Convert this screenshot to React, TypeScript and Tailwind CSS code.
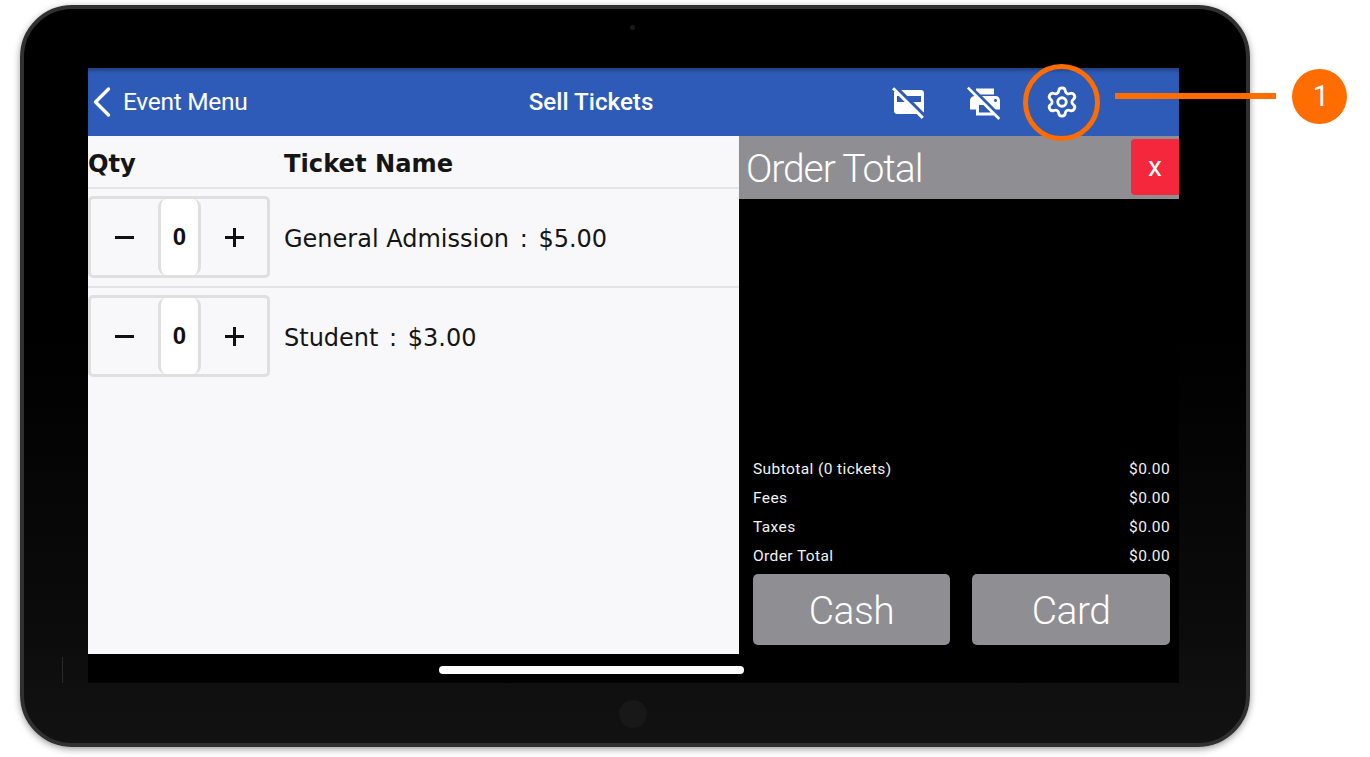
import React from "react";
import { Settings } from "lucide-react";
import { MdCreditCardOff, MdPrintDisabled } from "react-icons/md";

const dj = { fontFamily: '"DejaVu Sans", sans-serif' };

function Stepper() {
  return (
    <div className="flex h-[82px] w-[182px] items-stretch rounded-[5px] border-[3px] border-[#dfdfdf] bg-[#f8f8fa]">
      <div className="flex w-[67px] items-center justify-center">
        <span className="block h-[3px] w-[19px] bg-[#111]" />
      </div>
      <div className="flex w-[43px] items-center justify-center rounded-[8px] border-x-[3px] border-[#dfdfdf] bg-white text-[24px] font-bold text-[#111]" style={{ fontFamily: '"Liberation Sans", sans-serif' }}>0</div>
      <div className="flex flex-1 items-center justify-center">
        <span className="relative block h-[19px] w-[19px]">
          <span className="absolute left-0 top-[8px] h-[3px] w-[19px] bg-[#111]" />
          <span className="absolute left-[8px] top-0 h-[19px] w-[3px] bg-[#111]" />
        </span>
      </div>
    </div>
  );
}

function Row({ name, price, last }: { name: string; price: string; last?: boolean }) {
  return (
    <div className={last ? "flex h-[99px] pt-[7px]" : "flex h-[99px] border-b-[2px] border-[#e4e4e6] pt-[7px]"}>
      <Stepper />
      <div className="ml-[14px] flex h-[82px] items-center whitespace-pre pt-[4px] text-[24px] text-[#151515]" style={dj}>
        {name}
        <span className="mx-[3px]"> : </span>
        {price}
      </div>
    </div>
  );
}

function Line({ l }: { l: string }) {
  return (
    <div className="flex h-[29px] items-center justify-between pt-[2px] text-[15.5px] tracking-[0.4px] text-[#f2f2f2]">
      <span>{l}</span>
      <span>$0.00</span>
    </div>
  );
}

export default function App() {
  return (
    <div className="relative h-[757px] w-[1370px] overflow-hidden bg-white pl-[20px] pt-[5px]" style={{ fontFamily: 'Roboto, "Liberation Sans", sans-serif' }}>
      <div className="relative h-[742px] w-[1230px] rounded-[52px] border-[4px] border-[#303030] bg-[linear-gradient(to_bottom,#000_0%,#000_45%,#0a0a0a_80%,#121212_100%)] pl-[64px] pt-[59px] shadow-[0_2px_7px_rgba(0,0,0,0.4)]">
        <span className="absolute left-[606px] top-[16px] h-[5px] w-[5px] rounded-full bg-[#1a1a1a]" />
        <div className="flex h-[615px] w-[1091px] flex-col bg-black">
          <header className="flex h-[68px] items-center bg-[#2d5bb7] text-white shadow-[inset_0_5px_4px_-3px_rgba(0,0,0,0.35)]">
            <div className="flex w-[403px] items-center">
              <svg className="ml-[5px]" width="18" height="32" viewBox="0 0 18 32" fill="none" stroke="currentColor" strokeWidth="3.4" strokeLinecap="round" strokeLinejoin="round">
                <path d="M15.5 3 L2.5 16 L15.5 29" />
              </svg>
              <span className="ml-[12px] text-[24.5px] tracking-[-0.3px]">Event Menu</span>
            </div>
            <span className="w-[200px] text-center text-[24.2px] font-medium">Sell Tickets</span>
            <MdCreditCardOff className="ml-[200px] h-[36px] w-[36px]" />
            <MdPrintDisabled className="ml-[40px] h-[36px] w-[36px]" />
            <Settings className="ml-[42px] h-[34px] w-[34px]" strokeWidth={2} />
          </header>
          <main className="flex h-[518px]">
            <section className="w-[651px] bg-[#f8f8fa]">
              <div className="flex h-[53px] items-center border-b-[2px] border-[#e4e4e6] pt-[6px] text-[24.2px] font-bold text-[#151515]" style={dj}>
                <span className="w-[196px]">Qty</span>
                <span>Ticket Name</span>
              </div>
              <Row name="General Admission" price="$5.00" />
              <Row name="Student" price="$3.00" last />
            </section>
            <section className="flex w-[440px] flex-col bg-black">
              <div className="flex h-[63px] items-start justify-between bg-[#8e8e93] text-white">
                <span className="ml-[7px] mt-[9px] text-[39px] font-light leading-[48px] tracking-[-1.1px]">Order Total</span>
                <span className="mt-[3px] flex h-[56px] w-[48px] items-center justify-center rounded-l-[4px] bg-[#f5273c] text-[28px]">x</span>
              </div>
              <div className="mt-auto pl-[14px] pr-[9px]">
                <Line l="Subtotal (0 tickets)" />
                <Line l="Fees" />
                <Line l="Taxes" />
                <Line l="Order Total" />
                <div className="mt-[4px] flex justify-between pb-[9px]">
                  <button className="flex h-[71px] w-[197px] items-center justify-center rounded-[5px] bg-[#8e8e93] pt-[4px] text-[39px] font-light tracking-[-0.5px] text-white">Cash</button>
                  <button className="flex h-[71px] w-[198px] items-center justify-center rounded-[5px] bg-[#8e8e93] pt-[4px] text-[39px] font-light tracking-[-0.5px] text-white">Card</button>
                </div>
              </div>
            </section>
          </main>
          <div className="flex flex-1 items-start bg-black pl-[351px] pt-[12px]">
            <span className="block h-[8px] w-[305px] rounded-full bg-white" />
          </div>
        </div>
        <span className="absolute left-[595px] top-[691px] h-[28px] w-[28px] rounded-full bg-[#181818]" />
        <span className="absolute left-[38px] top-[648px] h-[26px] w-[1px] bg-[#2a2a2a]" />
      </div>

      <div className="absolute left-[1023px] top-[64px] h-[77px] w-[77px] rounded-full border-[5px] border-[#ff6c00]" />
      <div className="absolute left-[1115px] top-[93px] h-[6px] w-[161px] bg-[#ff6c00]" />
      <div className="absolute left-[1292px] top-[69px] flex h-[55px] w-[55px] items-center justify-center rounded-full bg-[#ff6c00] pl-[3px] text-[29px] text-white">1</div>
    </div>
  );
}
